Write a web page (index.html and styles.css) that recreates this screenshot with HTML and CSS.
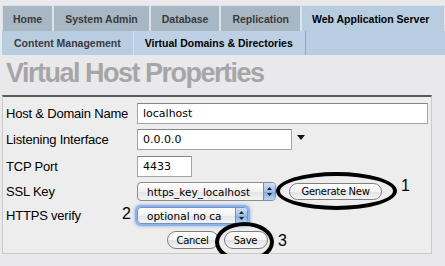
FILE: index.html
```html
<!DOCTYPE html>
<html lang="en">
<head>
  <meta charset="UTF-8" />
  <title>Virtual Host Properties</title>
  <link rel="stylesheet" href="styles.css">
</head>
<body>
  <div class="tabs">
    <div class="tab-row main">
      <a class="tab">Home</a>
      <a class="tab">System Admin</a>
      <a class="tab">Database</a>
      <a class="tab">Replication</a>
      <a class="tab active">Web Application Server</a>
    </div>
    <div class="tab-row sub">
      <a class="tab">Content Management</a>
      <a class="tab current">Virtual Domains &amp; Directories</a>
    </div>
  </div>

  <h1 class="page-title">Virtual Host Properties</h1>

  <form class="props">
    <div class="row r1">
      <label>Host &amp; Domain Name</label>
      <input class="text host" type="text" value="localhost">
    </div>
    <div class="row r2">
      <label>Listening Interface</label>
      <input class="text iface" type="text" value="0.0.0.0">
      <svg class="drop" width="8" height="5" viewBox="0 0 8 5"><path d="M0 0h8L4 5z" fill="#111"/></svg>
    </div>
    <div class="row r3">
      <label>TCP Port</label>
      <input class="text port" type="text" value="4433">
    </div>
    <div class="row r4">
      <label>SSL Key</label>
      <span class="popup key">
        <span class="value">https_key_localhost</span>
        <span class="stepper">
          <svg width="5" height="9" viewBox="0 0 5 9"><path d="M2.5 0L5 3H0z M2.5 9L0 6h5z" fill="#222"/></svg>
        </span>
      </span>
      <button type="button" class="btn generate">Generate New</button>
    </div>
    <div class="row r5">
      <label>HTTPS verify</label>
      <span class="popup verify focus">
        <span class="value">optional no ca</span>
        <span class="stepper">
          <svg width="5" height="9" viewBox="0 0 5 9"><path d="M2.5 0L5 3H0z M2.5 9L0 6h5z" fill="#222"/></svg>
        </span>
      </span>
    </div>
    <div class="row actions">
      <button type="button" class="btn cancel">Cancel</button>
      <button type="button" class="btn save">Save</button>
    </div>

    <!-- hand drawn notes over the form -->
    <span class="ring ring-generate"></span>
    <span class="ring ring-save"></span>
    <span class="note n1">1</span>
    <span class="note n2">2</span>
    <span class="note n3">3</span>
  </form>
</body>
</html>
```

FILE: styles.css
```css
* {
  box-sizing: border-box;
}

body {
  margin: 0;
  background: #e9e9ec;
  font-family: "Liberation Sans", Arial, sans-serif;
  color: #000;
}

.tabs {
  margin: 5px 0 0 2px;
}

.tab-row {
  display: flex;
}

.tab-row.main {
  height: 26px;
}

.tab-row.sub {
  height: 24px;
  background: #b9cde1;
}

.tab {
  display: flex;
  align-items: center;
  padding: 0 11px;
  font-size: 10.5px;
  font-weight: bold;
  color: #3a3a3a;
  white-space: nowrap;
}

.main .tab {
  background: #a8b7c4;
  border: 1px solid #dde2e8;
  border-bottom: none;
  padding-top: 1px;
}

.main .tab:first-child {
  padding: 1px 10px 0;
}

.main .tab.active {
  flex-grow: 1;
  background: #b9cde1;
  color: #000;
  padding-left: 10px;
}

.sub .tab {
  padding: 0 12px;
}

.sub .tab.current {
  background: #bed1e4;
  color: #000;
  border-left: 1px solid #d6dee6;
  border-right: 1px solid #98a6b3;
  padding: 0 12px 0 11px;
}

.page-title {
  margin: 3px 0 7px 6px;
  height: 30px;
  line-height: 30px;
  font-size: 27px;
  letter-spacing: -1.5px;
  font-weight: bold;
  color: #a6a6a6;
}

.props {
  position: relative;
  margin: 0 0 0 2px;
  width: 430px;
  padding: 3px 0 0 3px;
  background: #ededed;
  border-top: 2px solid #5a5a5a;
  border-left: 1px solid #cacaca;
  border-right: 1px solid #cacaca;
  border-bottom: 1px solid #cacaca;
}

.row {
  display: flex;
  align-items: center;
}

.r1 { height: 26px; }
.r2 { height: 27px; }
.r3 { height: 26px; }
.r4 { height: 25px; }
.r5 { height: 23px; }

.row label {
  width: 131px;
  font-size: 13px;
  letter-spacing: -0.2px;
}

.text {
  height: 21px;
  padding: 0 5px;
  border: 1px solid #a5a5a5;
  border-top-color: #858585;
  background: #fff;
  font-family: "DejaVu Sans", sans-serif;
  font-size: 11px;
  color: #000;
}

.host { width: 291px; }
.iface { width: 155px; }
.port { width: 55px; }

.drop {
  margin: -4px 0 0 5px;
}

.popup {
  display: inline-flex;
  border: 1px solid #8c8c8c;
  border-radius: 4px;
  background: linear-gradient(#ffffff, #f2f2f2 50%, #e4e4e4 51%, #f4f4f4);
  overflow: hidden;
}

.popup .value {
  flex: 1;
  display: flex;
  align-items: center;
  padding-left: 9px;
  font-family: "DejaVu Sans", sans-serif;
  font-size: 10.5px;
  white-space: nowrap;
}

.key {
  width: 139px;
  height: 19px;
}

.verify {
  width: 111px;
  height: 17px;
}

.popup.focus {
  border-color: #6f92c8;
  box-shadow: 0 0 0 2px #8db2e8, 0 0 3px 3px rgba(120, 160, 225, 0.5);
}

.stepper {
  width: 12px;
  display: flex;
  align-items: center;
  justify-content: center;
  background: linear-gradient(#cfe0f7, #9fc0ea 50%, #7eaae3 51%, #b8d3f4);
  border-left: 1px solid #7a8ea8;
}

.btn {
  height: 18px;
  padding: 0;
  border: 1px solid #7e7e7e;
  border-radius: 9px;
  background: linear-gradient(#ffffff, #f3f3f3 50%, #e2e2e2 51%, #f5f5f5);
  font-family: "DejaVu Sans", sans-serif;
  font-size: 10px;
  letter-spacing: -0.3px;
  color: #000;
}

.generate {
  width: 93px;
  height: 17px;
  margin-left: 13px;
}

.actions {
  height: 26px;
  justify-content: center;
  gap: 5px;
  padding-right: 3px;
}

.cancel { width: 52px; }
.save { width: 44px; }

.ring {
  position: absolute;
  border: 4px solid #000;
  border-radius: 50%;
}

.ring-generate {
  left: 273px;
  top: 75px;
  width: 121px;
  height: 38px;
}

.ring-save {
  left: 212px;
  top: 125px;
  width: 59px;
  height: 40px;
}

.note {
  position: absolute;
  font-size: 16px;
  line-height: 16px;
  color: #000;
}

.n1 { left: 398px; top: 81px; }
.n2 { left: 119px; top: 109px; }
.n3 { left: 275px; top: 136px; }
```
